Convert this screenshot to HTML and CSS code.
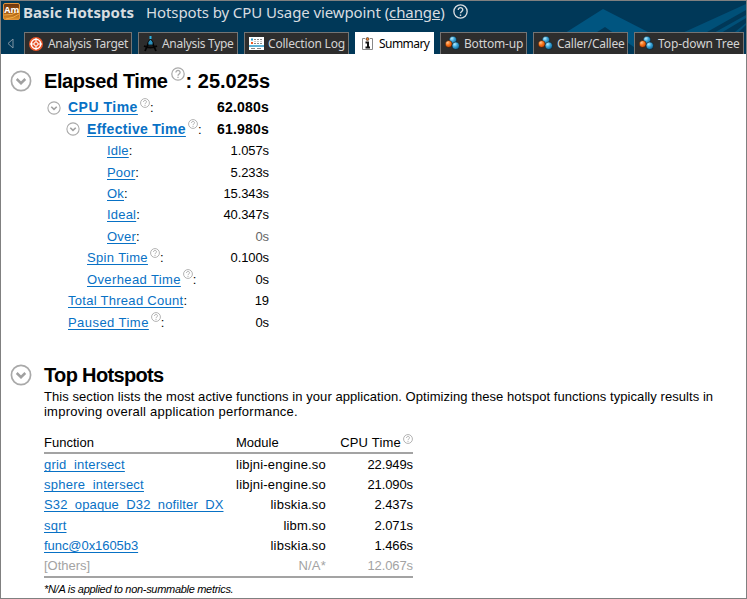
FILE: index.html
```html
<!DOCTYPE html>
<html lang="en">
<head>
<meta charset="utf-8">
<title>Basic Hotspots</title>
<link rel="stylesheet" href="styles.css">
</head>
<body>
<svg class="defs" width="0" height="0">
  <defs>
    <radialGradient id="blue" cx=".35" cy=".3" r=".8"><stop offset="0" stop-color="#b5ecff"/><stop offset=".45" stop-color="#38a3d8"/><stop offset="1" stop-color="#08527f"/></radialGradient>
    <radialGradient id="orange" cx=".35" cy=".3" r=".8"><stop offset="0" stop-color="#ffc48f"/><stop offset=".45" stop-color="#fa7318"/><stop offset="1" stop-color="#b83c00"/></radialGradient>
    <linearGradient id="amber" x1="0" y1="0" x2="0" y2="1"><stop offset="0" stop-color="#6b3410"/><stop offset=".5" stop-color="#9c520f"/><stop offset="1" stop-color="#dd922c"/></linearGradient>
    <symbol id="help" viewBox="0 0 14 14"><circle cx="7" cy="7" r="6.2" fill="none" stroke="currentColor" stroke-width="1.25"/><path d="M4.9 5.5C4.9 2.6 9.2 2.8 9.1 5.4C9.1 7 7 6.900 7 8.700M7 9.800V11.100" fill="none" stroke="currentColor" stroke-width="1.3"/></symbol>
    <symbol id="chev" viewBox="0 0 22 22"><circle cx="11" cy="11" r="9.6" fill="none" stroke="#a9a9a9" stroke-width="1.7"/><path d="M6.7 9L11 13.2L15.3 9" fill="none" stroke="#a0a0a0" stroke-width="2.5"/></symbol>
    <symbol id="balls" viewBox="0 0 15 14"><circle cx="8" cy="4" r="3.8" fill="url(#blue)" stroke="#111" stroke-width=".5"/><circle cx="3.7" cy="8" r="3.5" fill="url(#orange)" stroke="#111" stroke-width=".5"/><circle cx="10.8" cy="9.8" r="3.8" fill="url(#blue)" stroke="#111" stroke-width=".5"/></symbol>
  </defs>
</svg>
<div class="window">
  <header class="top">
    <svg class="backdrop" width="300" height="53" viewBox="0 0 300 53"><path d="M86 53L157 8L245 53H198L159 26L116 53Z" fill="#005580"/><path d="M190 53L300 3V9L222 53ZM230 53L300 14V17L240 53ZM262 53L300 22V24L270 53Z" fill="#005078"/></svg>
    <div class="titlebar">
      <svg class="app" width="17" height="17" viewBox="0 0 17 17"><rect x=".5" y=".5" width="16" height="16" rx="1.5" fill="url(#amber)" stroke="#e2923a"/><path d="M1 12Q9 13 16 8M3 16Q11 15 16 11" fill="none" stroke="#f3ad46"/><text x="1.3" y="9.7" class="appname">Am</text></svg>
      <strong class="name">Basic Hotspots</strong>
      <span class="view">Hotspots by CPU Usage viewpoint (<u>change</u>)</span>
      <svg class="tophelp" width="15" height="15"><use href="#help"/></svg>
    </div>
    <nav class="tabs">
      <svg class="back" width="7" height="11" viewBox="0 0 7 11"><path d="M6 1V10L1 5.5Z" fill="none" stroke="#7f94a3"/></svg>
      <a class="tab t1"><svg width="14" height="14" viewBox="0 0 14 14"><circle cx="7" cy="7" r="7" fill="#e9572b"/><circle cx="7" cy="7" r="4.700" fill="none" stroke="#fff" stroke-width="1.500"/><circle cx="7" cy="7" r="2" fill="none" stroke="#fff"/><path d="M7 1V5M7 9V13M1 7H5M9 7H13" stroke="#fff"/></svg><span>Analysis Target</span></a>
      <a class="tab t2"><svg width="15" height="16" viewBox="0 0 15 16"><path d="M6.500 5L2 15M8.500 5L13 15M1 10Q7.500 13 14 10" fill="none" stroke="#050505" stroke-width="1.8"/><path d="M7.500 0V3" stroke="#28b5e5" stroke-width="2"/><path d="M7.500 3L10 6V9H5V6Z" fill="#2b91bd" stroke="#000" stroke-width=".8"/></svg><span>Analysis Type</span></a>
      <a class="tab t3"><svg width="15" height="13" viewBox="0 0 15 13"><path fill="#fff" d="M0 0H15V13H0Z"/><path d="M5 2.500H7M8 2.500H10M11 2.500H13M5 6.500H7M8 6.500H10M11 6.500H13M2 11.500H6M8 11.500H12" stroke="#888"/><path d="M5 4.500H13" stroke="#ccc" stroke-dasharray="2 1"/><path d="M2 2.500H4" stroke="#2799c8" stroke-width="2"/><path d="M2 6H4" stroke="#ef5b24" stroke-width="2"/><path d="M0 9H15" stroke="#2799c8" stroke-width="1.500"/></svg><span>Collection Log</span></a>
      <a class="tab t4 active"><svg width="11" height="13" viewBox="0 0 11 13"><path d="M3 1.500H.5V12.500H10.500V1.500H8" fill="none" stroke="#888"/><path d="M3.500 5.500H6V10.500M3.500 10.500H8" fill="none" stroke="#111" stroke-width="2"/><circle cx="5.500" cy="2" r="1.500" fill="#e77b27" stroke="#111" stroke-width=".5"/></svg><span>Summary</span></a>
      <a class="tab t5"><svg width="15" height="14"><use href="#balls"/></svg><span>Bottom-up</span></a>
      <a class="tab t6"><svg width="15" height="14"><use href="#balls"/></svg><span>Caller/Callee</span></a>
      <a class="tab t7"><svg width="15" height="14"><use href="#balls"/></svg><span>Top-down Tree</span></a>
    </nav>
  </header>
  <main>
    <section class="elapsed">
      <h1><svg class="big" width="22" height="22"><use href="#chev"/></svg><span class="et">Elapsed Time</span><svg class="q qbig" width="14" height="14"><use href="#help"/></svg><span class="etv">: 25.025s</span></h1>
      <dl>
        <div class="row l1 bold"><dt><svg class="small" width="14" height="14"><use href="#chev"/></svg><a class="cpu">CPU Time</a><svg class="q" width="10" height="10"><use href="#help"/></svg>:</dt><dd>62.080s</dd></div>
        <div class="row l2 bold"><dt><svg class="small" width="14" height="14"><use href="#chev"/></svg><a class="eff">Effective Time</a><svg class="q" width="10" height="10"><use href="#help"/></svg>:</dt><dd>61.980s</dd></div>
        <div class="row l3"><dt><a class="n">Idle</a>:</dt><dd>1.057s</dd></div>
        <div class="row l3"><dt><a class="n">Poor</a>:</dt><dd>5.233s</dd></div>
        <div class="row l3"><dt><a class="n">Ok</a>:</dt><dd>15.343s</dd></div>
        <div class="row l3"><dt><a class="n">Ideal</a>:</dt><dd>40.347s</dd></div>
        <div class="row l3"><dt><a class="n">Over</a>:</dt><dd class="zero">0s</dd></div>
        <div class="row l2"><dt><a class="spin">Spin Time</a><svg class="q" width="10" height="10"><use href="#help"/></svg>:</dt><dd>0.100s</dd></div>
        <div class="row l2"><dt><a class="over">Overhead Time</a><svg class="q" width="10" height="10"><use href="#help"/></svg>:</dt><dd>0s</dd></div>
        <div class="row l1"><dt><a class="total">Total Thread Count</a>:</dt><dd>19</dd></div>
        <div class="row l1"><dt><a class="paused">Paused Time</a><svg class="q" width="10" height="10"><use href="#help"/></svg>:</dt><dd>0s</dd></div>
      </dl>
    </section>
    <section class="hot">
      <h2><svg class="big" width="22" height="22"><use href="#chev"/></svg><span class="th">Top Hotspots</span></h2>
      <p><span class="p1">This section lists the most active functions in your application. Optimizing these hotspot functions typically results in</span><br><span class="p2">improving overall application performance.</span></p>
      <table>
        <thead><tr><th>Function</th><th class="mod">Module</th><th class="time">CPU Time<svg class="q" width="10" height="10"><use href="#help"/></svg></th></tr></thead>
        <tbody>
          <tr><td><a class="f1">grid_intersect</a></td><td>libjni-engine.so</td><td>22.949s</td></tr>
          <tr><td><a class="f2">sphere_intersect</a></td><td>libjni-engine.so</td><td>21.090s</td></tr>
          <tr><td><a class="f3">S32_opaque_D32_nofilter_DX</a></td><td>libskia.so</td><td>2.437s</td></tr>
          <tr><td><a class="f4">sqrt</a></td><td>libm.so</td><td>2.071s</td></tr>
          <tr><td><a class="f5">func@0x1605b3</a></td><td>libskia.so</td><td>1.466s</td></tr>
          <tr class="others"><td>[Others]</td><td>N/A*</td><td>12.067s</td></tr>
        </tbody>
      </table>
      <p class="note">*N/A is applied to non-summable metrics.</p>
    </section>
  </main>
</div>
</body>
</html>
```
FILE: styles.css
```css
* { box-sizing: border-box; }
body { margin: 0; background: #fff; color: #000; font: 13px/15px "Liberation Sans", Arial, sans-serif; }
.defs { position: absolute; }
.window { width: 747px; height: 599px; border: 1px solid #808080; overflow: hidden; }
.top { position: relative; height: 53px; background: #003858; overflow: hidden; font-family: "Noto Sans", sans-serif; }
.backdrop { position: absolute; right: 0; top: 0; }
.titlebar { position: relative; display: flex; align-items: center; height: 31px; padding: 0 0 8px 2px; color: #d8dde0; white-space: nowrap; }
.app { flex: none; margin-top: -3px; }
.appname { font: bold 9px "Open Sans", sans-serif; fill: #fff; }
.name { width: 112px; margin-left: 3px; font-size: 15px; letter-spacing: .05px; }
.view { width: 300px; margin-left: 11px; font-size: 15px; letter-spacing: -.1px; }
.tophelp { margin: -2px 0 0 7px; }
.tabs { position: relative; display: flex; align-items: center; height: 22px; }
.back { margin: 0 10px 0 6px; }
.tab { display: flex; align-items: center; height: 22px; margin-right: 6px; padding-left: 4px; border: 1px solid #747474; border-bottom: 0; background: #2d2d2d; color: #d4d4d4; font-size: 12px; letter-spacing: -.2px; white-space: nowrap; flex: none; }
.tab svg { flex: none; margin-right: 5px; }
.t1 { width: 108px; letter-spacing: -.3px; }
.t2 { width: 100px; letter-spacing: -.3px; }
.t2 svg { margin-right: 4px; }
.t3 { width: 105px; }
.t3 svg { margin-right: 4px; }
.t4 { width: 79px; padding-left: 6px; letter-spacing: -.55px; }
.t4 svg { margin-right: 6px; }
.t5 { width: 87px; }
.t5 svg, .t6 svg, .t7 svg { margin: -1px 4px 0 0; }
.t6 { width: 95px; letter-spacing: -.25px; }
.t7 { width: 110px; margin-right: 0; letter-spacing: -.1px; }
.tab.active { background: #fff; color: #000; border-color: #fff; }
main { padding-left: 9px; }
h1, h2 { display: flex; align-items: center; margin: 0; height: 24px; font-size: 20px; line-height: 24px; white-space: nowrap; }
h1 { margin-top: 15px; }
h2 { margin-top: 30px; }
.big { flex: none; margin-right: 12px; }
.et { letter-spacing: -.42px; }
.etv { letter-spacing: 0; }
.th { letter-spacing: -.65px; }
.q { color: #aaa; flex: none; margin: 0 0 0 2px; position: relative; top: -5px; }
.qbig { top: -7px; margin: 0 1px 0 3px; }
dl { margin: 4px 0 0; width: 259px; }
.row { display: flex; justify-content: space-between; align-items: center; height: 21.45px; white-space: nowrap; }
dt { display: flex; align-items: center; }
dd { margin: 0; letter-spacing: -.1px; }
.bold a, .bold dd { font-weight: bold; font-size: 14px; }
.bold dd { letter-spacing: .2px; }
.small { margin-right: 7px; }
.l1 { padding-left: 58px; }
.l2 { padding-left: 77px; }
.l3 { padding-left: 97px; }
.l1.bold { padding-left: 37px; }
.l2.bold { padding-left: 56px; }
.cpu { letter-spacing: .5px; }
.eff { letter-spacing: .3px; }
.n { letter-spacing: .2px; }
.spin { letter-spacing: .35px; }
.over { letter-spacing: .38px; }
.total { letter-spacing: .28px; }
.paused { letter-spacing: .45px; }
a:not(.tab) { color: #0871c5; text-decoration: underline; text-underline-offset: 2px; text-decoration-skip-ink: none; }
.zero { color: #666; }
p { margin: 2px 0 0 34px; white-space: nowrap; }
.p1 { letter-spacing: .06px; }
.p2 { letter-spacing: .23px; }
table { width: 369px; margin: 14px 0 0 34px; border-collapse: collapse; table-layout: fixed; border-bottom: 2px solid #a3a3a3; }
th { font-weight: normal; text-align: left; height: 20px; padding: 0; border-bottom: 2px solid #a3a3a3; }
.mod { width: 90px; }
.time { width: 87px; text-align: right; letter-spacing: .2px; }
.time .q { margin-right: 0; top: -3px; }
td { height: 20.4px; padding: 2px 0 0; text-align: right; white-space: nowrap; }
td:first-child { text-align: left; }
td:nth-child(2) { letter-spacing: .2px; }
td:nth-child(3) { letter-spacing: -.1px; }
th:first-child { width: 192px; }
.f1 { letter-spacing: .2px; }
.f2 { letter-spacing: .24px; }
.f3 { letter-spacing: .12px; }
.f4 { letter-spacing: .2px; }
.f5 { letter-spacing: -.06px; }
.others { color: #a3a3a3; }
.others td { height: 22px; padding: 1px 0; }
.note { font-size: 11px; font-style: italic; letter-spacing: -.3px; margin-top: 4px; }
```
